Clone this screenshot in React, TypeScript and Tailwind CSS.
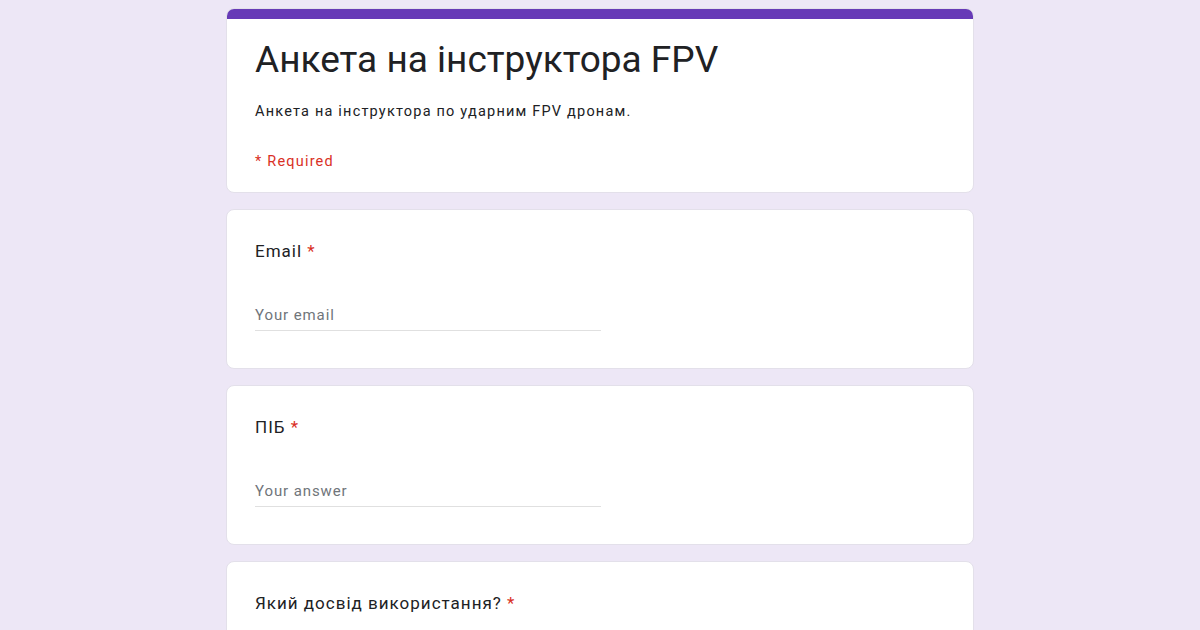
import React from 'react';

// ---------------------------------------------------------------------------
// Form question card
// ---------------------------------------------------------------------------

function QuestionCard({ label, placeholder }: { label: string; placeholder?: string }) {
  return (
    <div className="bg-white border border-[#e3e0ea] rounded-lg h-[160px] pl-[28px] pt-[29px] shrink-0">
      <p className="text-[17px] leading-[24px] text-[#202124] tracking-[1px]">
        {label} <span className="text-[#d93025]">*</span>
      </p>
      {placeholder && (
        <div className="mt-[40px] w-[346px] border-b border-[#e0e0e0] pb-[3px]">
          <span className="text-[15px] leading-[22px] text-[#70757a] tracking-[0.9px]">{placeholder}</span>
        </div>
      )}
    </div>
  );
}

export default function App() {
  return (
    <div
      className="w-[1200px] h-[630px] overflow-hidden bg-[#ede7f6] flex justify-center pt-[8px]"
      style={{ fontFamily: 'Roboto, "Noto Sans", Arial, sans-serif' }}
    >
      <div className="w-[748px] flex flex-col gap-[16px]">
        {/* Header */}
        <div className="bg-white border border-[#e3e0ea] rounded-lg overflow-hidden h-[185px] shrink-0">
          <div className="h-[10px] bg-[#673ab7]" />
          <div className="pl-[28px] pt-[17px]">
            <h1 className="text-[37px] leading-[48px] text-[#202124]">Анкета на інструктора FPV</h1>
            <p className="mt-[18px] text-[14.5px] leading-[20px] text-[#202124] tracking-[1.2px]">
              Анкета на інструктора по ударним FPV дронам.
            </p>
            <p className="mt-[30px] text-[14.5px] leading-[20px] text-[#d93025] tracking-[1.2px]">* Required</p>
          </div>
        </div>

        <QuestionCard label="Email" placeholder="Your email" />
        <QuestionCard label="ПІБ" placeholder="Your answer" />
        <QuestionCard label="Який досвід використання?" />
      </div>
    </div>
  );
}
